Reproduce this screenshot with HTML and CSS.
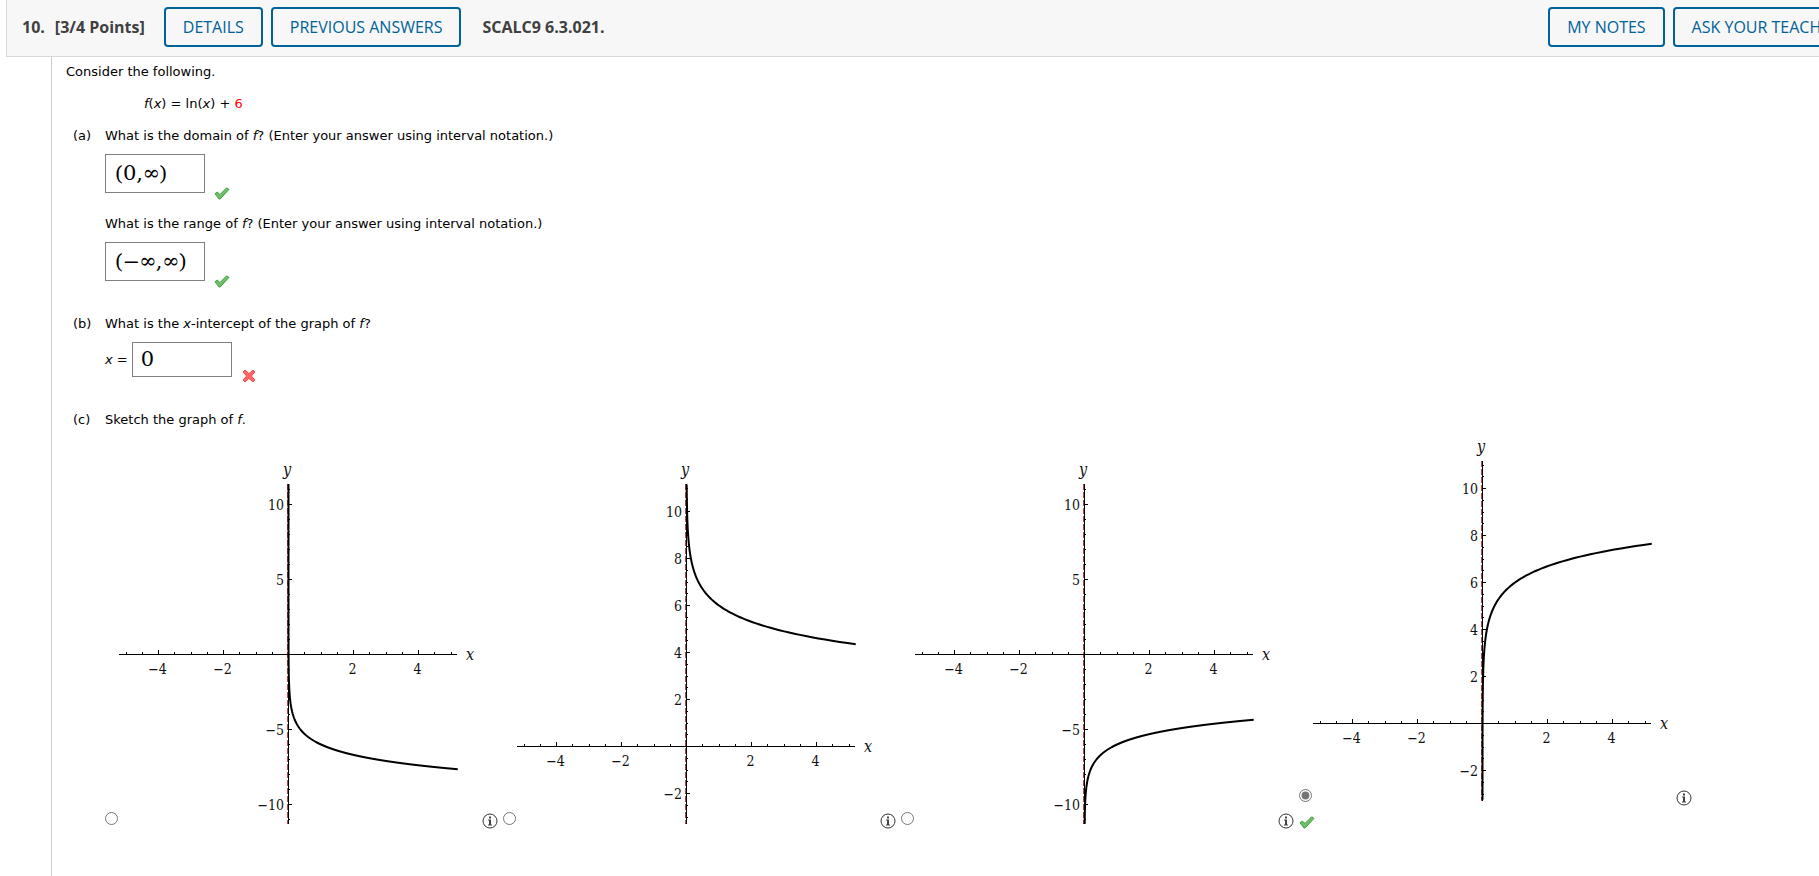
FILE: index.html
```
<!DOCTYPE html>
<html lang="en">
<head>
  <meta charset="UTF-8">
  <meta name="viewport" content="width=device-width, initial-scale=1.0">
  <title>SCALC9 6.3.021</title>
  <link rel="stylesheet" href="styles.css">
</head>
<body>
  <!-- Shared icons -->
  <svg class="sprite" aria-hidden="true">
    <symbol id="icon-check" viewBox="0 0 16 13">
      <path d="M1 6.8 L3.2 5 L6 7.4 L12.6 0.8 L15 2.4 L6.2 12 L5 12 Z" fill="#6cc067" stroke="#4a9e48" stroke-width="1" stroke-linejoin="round"/>
    </symbol>
    <symbol id="icon-cross" viewBox="0 0 14 14">
      <path d="M3 1 L7 4.6 L11 1 L13 3 L9.4 7 L13 11 L11 13 L7 9.4 L3 13 L1 11 L4.6 7 L1 3 Z" fill="#ff6666" stroke="#ee4c4c" stroke-width="1" stroke-linejoin="round"/>
    </symbol>
    <symbol id="icon-info" viewBox="0 0 16 16">
      <circle cx="8" cy="8" r="7" fill="none" stroke="#333" stroke-width="1"/>
      <path d="M7 3.5 h2 v2 h-2 z M6 6.5 h3 v5 h1 v1 h-4 v-1 h1 v-4 h-1 z" fill="#444"/>
    </symbol>
  </svg>

  <div class="page">
    <header class="question-header">
      <div class="header-left">
        <span class="number">10.</span>
        <span class="points">[3/4 Points]</span>
        <button type="button" class="btn">DETAILS</button>
        <button type="button" class="btn">PREVIOUS ANSWERS</button>
        <span class="source">SCALC9 6.3.021.</span>
      </div>
      <div class="header-right">
        <button type="button" class="btn">MY NOTES</button>
        <button type="button" class="btn">ASK YOUR TEACHER</button>
      </div>
    </header>

    <main class="question">
      <p class="intro">Consider the following.</p>
      <p class="formula"><i>f</i>(<i>x</i>) = ln(<i>x</i>) + <span class="random">6</span></p>

      <section class="part">
        <span class="letter">(a)</span>
        <div class="part-body">
          <label for="domain">What is the domain of <i>f</i>? (Enter your answer using interval notation.)</label>
          <div class="answer">
            <input type="text" id="domain" class="math-box" value="(0,∞)">
            <svg class="mark check"><use href="#icon-check"/></svg>
          </div>
          <label for="range">What is the range of <i>f</i>? (Enter your answer using interval notation.)</label>
          <div class="answer">
            <input type="text" id="range" class="math-box" value="(−∞,∞)">
            <svg class="mark check"><use href="#icon-check"/></svg>
          </div>
        </div>
      </section>

      <section class="part">
        <span class="letter">(b)</span>
        <div class="part-body">
          <p>What is the <i>x</i>-intercept of the graph of <i>f</i>?</p>
          <div class="answer">
            <label for="intercept" class="prefix"><i>x</i> =</label>
            <input type="text" id="intercept" class="math-box short" value="0">
            <svg class="mark cross"><use href="#icon-cross"/></svg>
          </div>
        </div>
      </section>

      <section class="part">
        <span class="letter">(c)</span>
        <div class="part-body">
          <p>Sketch the graph of <i>f</i>.</p>
          <div class="options" id="options"></div>
        </div>
      </section>
    </main>
  </div>

  <script src="graphs.js"></script>
</body>
</html>
```
FILE: styles.css
```
* {
  box-sizing: border-box;
}

body {
  margin: 0;
  background-color: #fff;
  color: #000;
  font-family: Verdana, "DejaVu Sans", sans-serif;
  font-size: 13px;
  line-height: 16px;
  overflow: hidden;
}

p {
  margin: 0;
}

.sprite {
  display: none;
}

/* The header runs a little past the right edge of the window */
.page {
  width: calc(100% + 48px);
  min-height: 100vh;
  padding-left: 6px;
  display: flex;
  flex-direction: column;
}

.question-header {
  display: flex;
  justify-content: space-between;
  align-items: center;
  height: 57px;
  padding: 0 8px 2px 15px;
  background-color: #f7f7f7;
  border-left: 1px solid #d8d8d8;
  border-bottom: 1px solid #d8d8d8;
  color: #404040;
  font-family: "Open Sans", sans-serif;
  font-size: 16px;
  font-weight: bold;
  white-space: nowrap;
}

.header-left,
.header-right {
  display: flex;
  align-items: center;
  gap: 8px;
}

.number {
  margin-right: 2px;
}

.points {
  margin-right: 11px;
}

.source {
  margin-left: 13px;
}

.btn {
  height: 40px;
  padding: 0 17px;
  background-color: transparent;
  border: 2px solid #006298;
  border-radius: 4px;
  color: #006298;
  font-family: inherit;
  font-size: 16px;
  cursor: pointer;
}

.btn:hover {
  background-color: #e6f0f5;
}

.question {
  flex: 1;
  margin-left: 45px;
  padding: 7px 0 0 14px;
  border-left: 1px solid #ccc;
}

.formula {
  margin: 16px 0 16px 78px;
}

.random {
  color: #f00;
}

.part {
  display: flex;
  padding-left: 7px;
  margin-bottom: 12px;
}

.letter {
  width: 32px;
}

.answer {
  display: flex;
  align-items: flex-end;
  margin: 10px 0 23px;
}

.prefix {
  align-self: center;
  margin-right: 4px;
}

.math-box {
  width: 100px;
  height: 39px;
  padding: 0 8px;
  border: 1px solid #808080;
  background-color: #fff;
  color: #000;
  font-family: "DejaVu Math TeX Gyre", "Liberation Serif", serif;
  font-size: 21px;
}

.math-box.short {
  height: 35px;
}

.mark {
  flex: none;
}

.check {
  width: 16px;
  height: 13px;
  margin: 0 0 -7px 9px;
}

.cross {
  width: 14px;
  height: 14px;
  margin: 0 0 -6px 10px;
}

/* Graph choices */
.options {
  display: flex;
  align-items: flex-end;
  margin-top: 8px;
}

.option {
  flex: none;
  width: 398px;
}

.choice {
  display: flex;
  align-items: flex-end;
}

.choice input {
  width: 13px;
  height: 13px;
  margin: 0 0 4px;
  accent-color: #767676;
}

.plot {
  width: 360px;
  height: 370px;
  display: block;
}

.info {
  width: 16px;
  height: 16px;
  padding: 0;
  margin-left: 4px;
  background: none;
  border: none;
  cursor: pointer;
}

.info svg {
  display: block;
  width: 16px;
  height: 16px;
}

.feedback {
  height: 23px;
  padding-top: 10px;
}

.feedback .check {
  display: block;
  margin: 0;
}

.plot text {
  font-family: "DejaVu Serif Condensed", "DejaVu Serif", serif;
  font-size: 14px;
  fill: #111;
}

.plot .axis-name {
  font-size: 16px;
  font-style: italic;
}

.axis {
  fill: none;
  stroke: #000;
  stroke-width: 1px;
}

.asymptote {
  stroke: #b44;
  stroke-width: 2px;
  stroke-dasharray: 6 2;
}

.curve {
  fill: none;
  stroke: #000;
  stroke-width: 2px;
}
```
FILE: graphs.js
```
// a * ln(x) + b for each choice, "zero" is the height of the x-axis in the plot
const graphs = [
  { a: -1, b: -6, zero: 195, unit: 15, minor: 1, labels: [10, 5, -5, -10] },
  { a: -1, b: 6, zero: 287, unit: 23.5, minor: 0.5, labels: [10, 8, 6, 4, 2, -2] },
  { a: 1, b: -6, zero: 195, unit: 15, minor: 1, labels: [10, 5, -5, -10] },
  { a: 1, b: 6, zero: 287, unit: 23.5, minor: 0.5, labels: [10, 8, 6, 4, 2, -2], checked: true }
];

const CENTER = 170;
const UNIT_X = 32.5;
const TOP = 25;
const BOTTOM = 365;

function minus(n) {
  return String(n).replace("-", "−");
}

function drawGraph(g) {
  const axisY = g.zero + 0.5;
  const axisX = CENTER + 0.5;
  let ticks = "";
  let texts = "";

  // x-axis ticks
  for (let x = -5; x <= 5; x += 0.5) {
    const px = Math.round(CENTER + x * UNIT_X) + 0.5;
    const major = x % 2 === 0;
    ticks += "M" + px + " " + axisY + "v" + (major ? -4.5 : -2.5);
    if (major && x !== 0) {
      texts += '<text x="' + (px - 1) + '" y="' + (g.zero + 20) + '" text-anchor="middle">' + minus(x) + "</text>";
    }
  }

  // y-axis ticks
  for (let i = -40; i <= 40; i++) {
    const y = i * g.minor;
    const py = Math.round(g.zero - y * g.unit) + 0.5;
    if (py < TOP || py > BOTTOM) continue;
    ticks += "M" + axisX + " " + py + "h" + (g.labels.includes(y) ? 3.5 : 1.5);
    if (g.labels.includes(y)) {
      texts += '<text x="' + (CENTER - 4) + '" y="' + (py + 5.5) + '" text-anchor="end">' + minus(y) + "</text>";
    }
  }

  // curve, stepped by height near the asymptote
  let curve = "";
  for (let t = -30; t <= Math.log(5.2) + 0.01; t += 0.05) {
    const px = axisX + Math.exp(t) * UNIT_X;
    const py = axisY - (g.a * t + g.b) * g.unit;
    if (py < TOP || py > BOTTOM) continue;
    curve += (curve ? "L" : "M") + px.toFixed(2) + " " + py.toFixed(2);
  }

  return '<svg class="plot" viewBox="0 0 360 370">' +
    '<line class="asymptote" x1="' + CENTER + '" y1="' + TOP + '" x2="' + CENTER + '" y2="' + BOTTOM + '"/>' +
    '<path class="axis" d="M1 ' + axisY + "H339M" + axisX + " " + TOP + "V" + BOTTOM + ticks + '"/>' +
    '<path class="curve" d="' + curve + '"/>' + texts +
    '<text class="axis-name" x="' + (CENTER - 1) + '" y="16" text-anchor="middle">y</text>' +
    '<text class="axis-name" x="352" y="' + (g.zero + 6) + '" text-anchor="middle">x</text>' +
    "</svg>";
}

document.getElementById("options").innerHTML = graphs.map(function (g, i) {
  return '<div class="option"><div class="choice">' +
    '<input type="radio" name="graph" id="graph' + i + '"' + (g.checked ? " checked" : "") + ">" +
    '<label for="graph' + i + '">' + drawGraph(g) + "</label>" +
    '<button type="button" class="info"><svg><use href="#icon-info"/></svg></button></div>' +
    (g.checked ? '<div class="feedback"><svg class="check"><use href="#icon-check"/></svg></div>' : "") +
    "</div>";
}).join("");
```
